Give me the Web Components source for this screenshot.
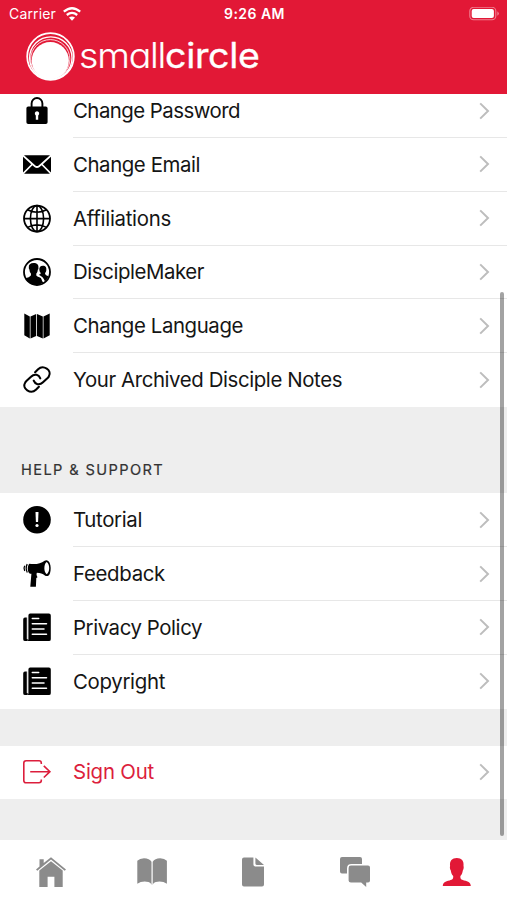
<!DOCTYPE html>
<html lang="en">
<head>
<meta charset="utf-8">
<title>smallcircle</title>
<style>
html,body{margin:0;height:100%;background:#eee}
body{font-family:Inter,"Liberation Sans",sans-serif;color:#151515;overflow:hidden}
</style>
</head>
<body>
<settings-app>
  <app-header slot="header"></app-header>
  <list-group class="first">
    <list-row icon="lock" fit="167">Change Password</list-row>
    <list-row icon="mail" fit="127">Change Email</list-row>
    <list-row icon="globe" fit="98">Affiliations</list-row>
    <list-row icon="contacts" fit="131">DiscipleMaker</list-row>
    <list-row icon="map" fit="170">Change Language</list-row>
    <list-row icon="link" fit="269" last>Your Archived Disciple Notes</list-row>
  </list-group>
  <list-heading fit="143">HELP &amp; SUPPORT</list-heading>
  <list-group>
    <list-row icon="alert" fit="69">Tutorial</list-row>
    <list-row icon="horn" fit="92">Feedback</list-row>
    <list-row icon="paper" fit="129">Privacy Policy</list-row>
    <list-row icon="paper" fit="92" last>Copyright</list-row>
  </list-group>
  <list-group class="spaced">
    <list-row icon="exit" fit="81" accent last>Sign Out</list-row>
  </list-group>
  <tab-bar slot="tabs"></tab-bar>
</settings-app>
<script>
const ICONS = {
lock:`<path d="M8.6 10V6.4a5.4 5.4 0 0 1 10.8 0V10" fill="none" stroke="currentColor" stroke-width="1.9"/><path fill-rule="evenodd" d="M5.2 9.4h17.6q1.8 0 1.8 1.8v14q0 1.8-1.8 1.8H5.2q-1.8 0-1.8-1.8v-14q0-1.8 1.8-1.8ZM14 14.2a2.3 2.3 0 0 0-1.2 4.2v4.4h2.4v-4.4a2.3 2.3 0 0 0-1.2-4.2Z"/>`,
mail:`<path d="M1 4.2h26L15.6 14.4q-1.6 1.4-3.2 0ZM0 5.8l8.2 7.4L0 21.4ZM28 5.8l-8.2 7.4L28 21.4ZM9.4 14.3l2 1.7q2.6 2.1 5.2 0l2-1.7 8.3 8.4H1.1Z"/>`,
globe:`<g fill="none" stroke="currentColor" stroke-width="1.6"><circle cx="14" cy="13.6" r="13" stroke-width="1.8"/><ellipse cx="14" cy="13.6" rx="6.6" ry="13"/><path d="M14 .6v26M1 13.6h26M4.5 4.8q9.5 5 19 0M4.5 22.4q9.5-5 19 0"/></g>`,
contacts:`<circle cx="14" cy="14" r="13" fill="none" stroke="currentColor" stroke-width="1.8"/><path d="M2.5 20.2q3.8-1 5.2-2.5.5-1 .2-2.1-1.4-1.5-1.5-4-.7-.6-.6-2.1C5.5 6.5 7.3 5 10.6 5c3.5 0 5.2 1.9 4.8 4.8.2 1.3-.3 1.7-.6 2-.2 2.2-.8 3.1-1.5 3.8v2q.8.9 3.1 1.7 1.9.7 2.1 2 .4 2.2 2 3.3Q14.5 29 7.5 25.4q-3.7-2-5-5.2Z"/><path d="M15.8 16.8q1.6-.4 1.9-1.2v-.7q-1.3-1.2-1.4-3.4-.1-3.7 3.5-3.8c3 0 3.9 1.8 3.5 4.6-.2 1.5-.7 2.3-1.2 2.7v1q.3 1.2 3.5 2.3-1 3-3.6 5.2-1.2-2.9-2.5-4.2-1.5-1.4-3.7-2.5Z"/>`,
map:`<path d="M1.3 1.4l5.5 3v22.2L1.3 23.2ZM7.5 4.4l5.7-2.3v21.8l-5.7 2.7ZM14 2.1l5.8 2.3v22.2L14 23.9ZM20.5 4.4L26.7 1.4v21.8l-6.2 3.4Z"/>`,
link:`<g fill="none" stroke="currentColor" stroke-width="2.1" stroke-linecap="round"><path d="M12.1 6.3l3-3c5-5 14.5.8 10.7 7.2q-.4.8-1.2 1.6l-4.6 4.1c-3.7 3.7-8 2-9.3-1.5"/><path d="M15.9 20.7l-3 3c-5 5-14.5-.8-10.7-7.2q.4-.8 1.2-1.6L8 10.8c3.7-3.7 8-2 9.3 1.5"/></g>`,
alert:`<circle cx="14" cy="13.7" r="13.8"/><path d="M12.5 5.9h3l-.4 10.2h-2.2Z" fill="#fff"/><circle cx="14" cy="19.5" r="1.6" fill="#fff"/>`,
horn:`<path fill-rule="evenodd" d="M6.3 3.8c6.8.6 11.4 0 15.3-3.1 1.8-1.2 3.9-.5 5 2 1.4 3 1.4 7.5.4 10.5-.9 2.8-3.2 3.6-5.1 2.2-2.3-1.7-4.6-2.7-8-2.7-.7 1.4-.3 2.8.6 4.6l-1.2.8-.4 8.6H7.3l1.1-13q-1 .2-1.8-.1C4.5 12.2 4 6.4 6.3 3.8ZM23.6 2.1c-3 2.4-3 9.9 0 12.2 3.5-2 3.5-10.1 0-12.2Z"/><path d="M4.2 4.1q-2.1 4.2.1 8.4M1.7 5.7q-1.5 2.6 0 5.3" fill="none" stroke="currentColor" stroke-width="1.3"/>`,
paper:`<g transform="translate(0 -.7)"><path d="M2 4.3h1.8v21.4h1V4.3H4.7V27.8H2.1Q.2 27.8.2 25.9V6.2q0-1.9 1.8-1.9Z"/><path d="M7.2.3h18.7q1.9 0 1.9 1.9v23.7q0 1.9-1.9 1.9H4.4q1-.7 1-2V2.2Q5.4.3 7.2.3Z"/><path d="M9.3 5.3h6.4M9.3 10.5h14.2M9.3 15.6H21M9.3 20.9h14.2" stroke="#fff" stroke-width="1.5" stroke-linecap="round"/></g>`,
exit:`<path d="M18.3 6V4.9q0-2.2-2.3-2.2H3.1Q.8 2.7.8 5v17.4q0 2.3 2.3 2.3H16q2.3 0 2.3-2.2v-1.1M7.2 13.7h19.8M20.8 7.9l6.1 5.8-6.1 5.8" fill="none" stroke="currentColor" stroke-width="1.6"/>`,
home:`<path d="M15 .2l5.2 4.4L30 12.5l-1.3 1.2L15 2.6 1.3 13.7 0 12.5l3.5-3V2.2h4.2V6Z"/><path d="M15 4.2l11.7 9.4V30h-8.3V19.7h-6.8V30H3.3V13.6Z"/>`,
book:`<path d="M14.5 28q-.5-3-5-3.3Q4 24.2.3 26.8V3.8Q2.7 1.2 7 1.2q5.5 0 7.5 3.6ZM15.7 28q.5-3 5-3.3 5.5-.5 9.2 2.1v-23Q27.5 1.2 23.2 1.2q-5.5 0-7.5 3.6Z"/>`,
doc:`<path d="M6 .5h9.4v7.1q0 2 2 2h8.6v17.8q0 2-2 2H6q-2 0-2-2V2.5q0-2 2-2Z"/><path d="M17.4.5l8.6 7.4h-7.3q-1.3 0-1.3-1.3Z"/>`,
chat:`<path d="M2 0h18q2 0 2 2v5H11.5Q7 7 7 11.4v5H2q-2 0-2-2V2Q0 0 2 0Z"/><path d="M11 8.6h17q2 0 2 2v13q0 2-2 2h-1.8V30l-5-4.4H11q-2.4 0-2.4-2V11q0-2.4 2.4-2.4Z"/>`,
person:`<path d="M1.8 29c.2-3.7 2.3-4.5 6.8-5.5 3-.7 3.8-1.7 3.6-4.4-1.7-1.7-2.2-4-2.4-5.6-.8-.8-1.2-3.5-.7-4.5C8.5 3.8 11 1 15.8 1s7.3 2.8 6.7 8c.5 1 .1 3.7-.7 4.5-.2 1.6-.7 3.9-2.4 5.6-.2 2.7.6 3.7 3.6 4.4 4.5 1 6.6 1.8 6.8 5.5Z"/>`
};
const shadow = (el, html) => {
  const t = document.createElement('template');
  t.innerHTML = html;
  const r = el.attachShadow({mode:'open'});
  r.append(t.content.cloneNode(true));
  return r;
};
/* Spreads a label's tracking so it takes the given line width. */
const fitText = (span, width) => {
  span.style.letterSpacing = '0px';
  const n = Number(span.dataset.count);
  span.style.letterSpacing = ((width - span.getBoundingClientRect().width) / n).toFixed(3) + 'px';
};
customElements.define('ui-icon', class extends HTMLElement {
  connectedCallback(){
    const s = this.getAttribute('size') || 28;
    shadow(this, `<style>:host{display:block;flex:none;width:${s}px;height:${s}px}svg{display:block;overflow:visible}</style>
    <svg width="${s}" height="${s}" viewBox="0 0 ${s} ${s}" fill="currentColor">${ICONS[this.getAttribute('name')]}</svg>`);
  }
});
customElements.define('app-header', class extends HTMLElement {
  connectedCallback(){
    const r = shadow(this, `<style>
    :host{display:block;height:93.5px;background:#e21836;color:#fff}
    .status{display:grid;grid-template-columns:1fr auto 1fr;align-items:center;height:27px;padding:0 7px 0 9px;font-size:14px}
    .left{display:flex;align-items:center;gap:7px}
    .time{font-weight:600}
    .battery{justify-self:end}
    svg{display:block}
    .brand{display:flex;align-items:center;padding:4.5px 0 0 25.5px;height:50px;gap:4.5px}
    .word{display:flex;font-size:35px;line-height:50px;font-feature-settings:"cv11";white-space:nowrap;margin-top:-4px;transform:scaleX(1.07);transform-origin:0 50%}
    .thin{font-weight:300;-webkit-text-stroke:.15px #fff}.bold{font-weight:400;-webkit-text-stroke:.35px #fff}
    </style>
    <div class="status"><div class="left"><span data-count="7" data-w="47">Carrier</span>
      <svg width="18" height="14" viewBox="0 0 18 14" fill="none" stroke="#fff" stroke-width="2.3"><path d="M.8 4.7q8.2-7 16.4 0M3.8 8q5.2-4.3 10.4 0"/><path d="M9 13.7L6 10.5q3-2.1 6 0Z" fill="#fff" stroke="none"/></svg></div>
      <span class="time" data-count="7" data-w="61">9:26 AM</span>
      <svg class="battery" width="31" height="14" viewBox="0 0 31 14"><rect x=".8" y=".3" width="26" height="12.4" rx="3.8" fill="none" stroke="#f07f90" stroke-width="1.1"/><rect x="2.7" y="2.1" width="22.2" height="8.8" rx="2" fill="#fff"/><path d="M28.3 4.2q3.2 2.3 0 4.6Z" fill="#f07f90"/></svg></div>
    <div class="brand"><svg width="49" height="49" viewBox="0 0 49 49" fill="none" stroke="#fff"><circle cx="24.5" cy="24.5" r="23.3" stroke-width="1.8"/><circle cx="24.8" cy="26" r="21.2" stroke-width="1.3"/><circle cx="24.3" cy="27.2" r="19.6" stroke-width=".8"/><circle cx="24.3" cy="28.6" r="18.6" fill="#fff" stroke="none"/></svg>
      <div class="word"><span class="thin" data-count="5" data-w="86.5">small</span><span class="bold" data-count="6" data-w="94.5">circle</span></div></div>`);
    r.querySelectorAll('[data-w]').forEach(s => fitText(s, +s.dataset.w));
  }
});
customElements.define('list-group', class extends HTMLElement {
  connectedCallback(){
    shadow(this, `<style>:host{display:block;background:#fff}:host(.first){margin-top:-9.3px}:host(.spaced){margin-top:37px}</style><slot></slot>`);
  }
});
customElements.define('list-heading', class extends HTMLElement {
  connectedCallback(){
    const r = shadow(this, `<style>:host{display:flex;align-items:flex-end;height:86.4px;box-sizing:border-box;padding:0 0 13.6px 21px;font-size:14.6px;line-height:20px;color:#333}span{white-space:nowrap;-webkit-text-stroke:.2px #333}</style><span data-count="14"><slot></slot></span>`);
    fitText(r.querySelector('span'), +this.getAttribute('fit'));
  }
});
customElements.define('list-row', class extends HTMLElement {
  connectedCallback(){
    const r = shadow(this, `<style>
    :host{display:flex;align-items:center;height:53.8px;padding-left:23px;gap:22px}
    ui-icon{color:#000}
    :host([accent]) ui-icon,:host([accent]) .label{color:#dc1e3c}
    .body{flex:1;height:100%;box-sizing:border-box;display:flex;align-items:center;justify-content:space-between;padding-right:17px;border-bottom:1px solid #e7e7e7}
    :host([last]) .body{border-color:transparent}
    .label{font-size:20.4px;line-height:26px;white-space:nowrap;padding-top:1px}
    </style><ui-icon name="${this.getAttribute('icon')}"></ui-icon>
    <div class="body"><span class="label" data-count="${this.textContent.length}"><slot></slot></span>
    <svg width="11" height="18" viewBox="0 0 11 18" fill="none" stroke="#bdbdbd" stroke-width="2"><path d="M1.2 1.4L9 9l-7.8 7.6"/></svg></div>`);
    fitText(r.querySelector('.label'), +this.getAttribute('fit'));
  }
});
customElements.define('tab-bar', class extends HTMLElement {
  connectedCallback(){
    shadow(this, `<style>:host{display:grid;grid-template-columns:repeat(5,1fr);justify-items:center;height:60.5px;box-sizing:border-box;padding-top:17.5px;background:#fff;color:#8b8b8b}.on{color:#e21836}</style>
    ${['home','book','doc','chat','person'].map((n,i)=>`<ui-icon name="${n}" size="30"${i===4?' class="on"':''}></ui-icon>`).join('')}`);
  }
});
customElements.define('settings-app', class extends HTMLElement {
  connectedCallback(){
    shadow(this, `<style>
    :host{display:flex;flex-direction:column;width:507px;height:900px;position:relative;background:#eee}
    main{flex:1;min-height:0;overflow:hidden;display:flow-root}
    .thumb{position:absolute;right:3px;top:292px;width:4px;height:543.5px;border-radius:2px;background:rgba(0,0,0,.36)}
    </style><slot name="header"></slot><main><slot></slot></main><slot name="tabs"></slot><div class="thumb"></div>`);
  }
});
</script>
</body>
</html>
